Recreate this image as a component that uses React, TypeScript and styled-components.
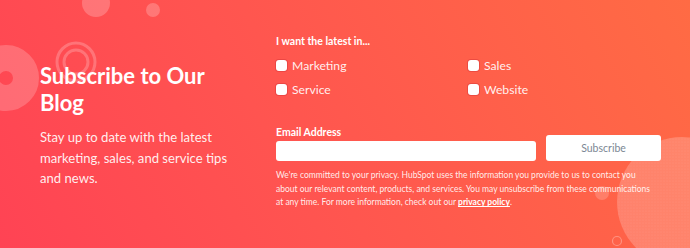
import React from 'react';
import styled, { createGlobalStyle } from 'styled-components';

const GlobalStyle = createGlobalStyle`
  html, body {
    margin: 0;
    padding: 0;
  }
  body {
    font-family: Lato, "Liberation Sans", sans-serif;
  }
`;

const Banner = styled.section`
  position: relative;
  width: 690px;
  height: 248px;
  overflow: hidden;
  display: flex;
  color: #fff;
  background: linear-gradient(62deg, #ff4354 0%, #ff5450 40%, #ff6b44 100%);
`;

const Decor = styled.svg`
  position: absolute;
  inset: 0;
  pointer-events: none;
`;

const Intro = styled.div`
  position: relative;
  width: 276px;
  flex-shrink: 0;
  padding: 62px 0 0 40px;
  box-sizing: border-box;
`;

const Title = styled.h2`
  margin: 0;
  font-size: 22px;
  line-height: 27px;
  font-weight: 700;
`;

const Lead = styled.p`
  margin: 11px 0 0;
  font-size: 13.1px;
  line-height: 20.5px;
  color: rgba(255, 255, 255, 0.92);
`;

const Form = styled.form`
  position: relative;
  width: 390px;
  padding-top: 35px;
  display: flex;
  flex-direction: column;
`;

const FieldLabel = styled.div`
  font-size: 10.5px;
  line-height: 12px;
  font-weight: 700;
`;

const Options = styled.div`
  display: grid;
  grid-template-columns: 192px 1fr;
  row-gap: 12px;
  margin-top: 12px;
`;

const Option = styled.label`
  display: flex;
  align-items: center;
  gap: 5px;
  height: 12px;
  font-size: 12.2px;
  color: rgba(255, 255, 255, 0.92);
`;

const Box = styled.input.attrs({ type: 'checkbox' })`
  appearance: none;
  margin: 0;
  width: 11px;
  height: 11px;
  border-radius: 3px;
  background: #fff;
  box-shadow: 0 0 0 1px rgba(200, 40, 50, 0.35);
`;

const EmailBlock = styled.div`
  margin-top: 31px;
`;

const InputRow = styled.div`
  display: flex;
  align-items: flex-end;
  gap: 10px;
  margin-top: -3px;
`;

const EmailInput = styled.input`
  width: 260px;
  height: 20px;
  box-sizing: border-box;
  border: none;
  border-radius: 3px;
  background: #fff;
`;

const SubmitButton = styled.button`
  width: 115px;
  height: 26px;
  border: none;
  border-radius: 3px;
  background: #fff;
  color: #7c8794;
  font-family: inherit;
  font-size: 10.5px;
`;

const Legal = styled.p`
  margin: 8px 0 0;
  font-size: 8.5px;
  line-height: 13.5px;
  color: rgba(255, 255, 255, 0.9);
  white-space: nowrap;
`;

const PolicyLink = styled.a`
  color: #fff;
  font-weight: 700;
  text-decoration: underline;
`;

const topics = ['Marketing', 'Sales', 'Service', 'Website'];

export default function App() {
  return (
    <>
      <GlobalStyle />
      <Banner>
        <Decor width="690" height="248" viewBox="0 0 690 248">
          <defs>
            <pattern id="dots" width="3" height="3" patternUnits="userSpaceOnUse">
              <circle cx="1" cy="1" r="0.5" fill="rgba(255,255,255,0.12)" />
            </pattern>
          </defs>
          <circle cx="96" cy="3" r="14" fill="rgba(255,255,255,0.22)" />
          <circle cx="153" cy="10" r="7" fill="rgba(255,255,255,0.22)" />
          <circle cx="6" cy="78" r="20" fill="none" stroke="rgba(255,255,255,0.2)" strokeWidth="26" />
          <circle cx="76" cy="62" r="19" fill="none" stroke="rgba(255,255,255,0.22)" strokeWidth="3" />
          <circle cx="76" cy="62" r="12" fill="none" stroke="rgba(255,255,255,0.22)" strokeWidth="3" />
          <circle cx="682" cy="202" r="65" fill="rgba(255,255,255,0.2)" />
          <circle cx="682" cy="202" r="65" fill="url(#dots)" />
          <circle cx="602" cy="193" r="7" fill="rgba(255,255,255,0.18)" />
          <circle cx="617" cy="241" r="4.5" fill="none" stroke="rgba(255,255,255,0.3)" strokeWidth="1.2" />
        </Decor>
        <Intro>
          <Title>
            Subscribe to Our
            <br />
            Blog
          </Title>
          <Lead>
            Stay up to date with the latest
            <br />
            marketing, sales, and service tips
            <br />
            and news.
          </Lead>
        </Intro>
        <Form onSubmit={(e) => e.preventDefault()}>
          <FieldLabel>I want the latest in...</FieldLabel>
          <Options>
            {topics.map((t) => (
              <Option key={t}>
                <Box />
                {t}
              </Option>
            ))}
          </Options>
          <EmailBlock>
            <FieldLabel>Email Address</FieldLabel>
            <InputRow>
              <EmailInput type="email" />
              <SubmitButton type="submit">Subscribe</SubmitButton>
            </InputRow>
          </EmailBlock>
          <Legal>
            We're committed to your privacy. HubSpot uses the information you provide to us to contact you
            <br />
            about our relevant content, products, and services. You may unsubscribe from these communications
            <br />
            at any time. For more information, check out our <PolicyLink href="#">privacy policy</PolicyLink>.
          </Legal>
        </Form>
      </Banner>
    </>
  );
}
